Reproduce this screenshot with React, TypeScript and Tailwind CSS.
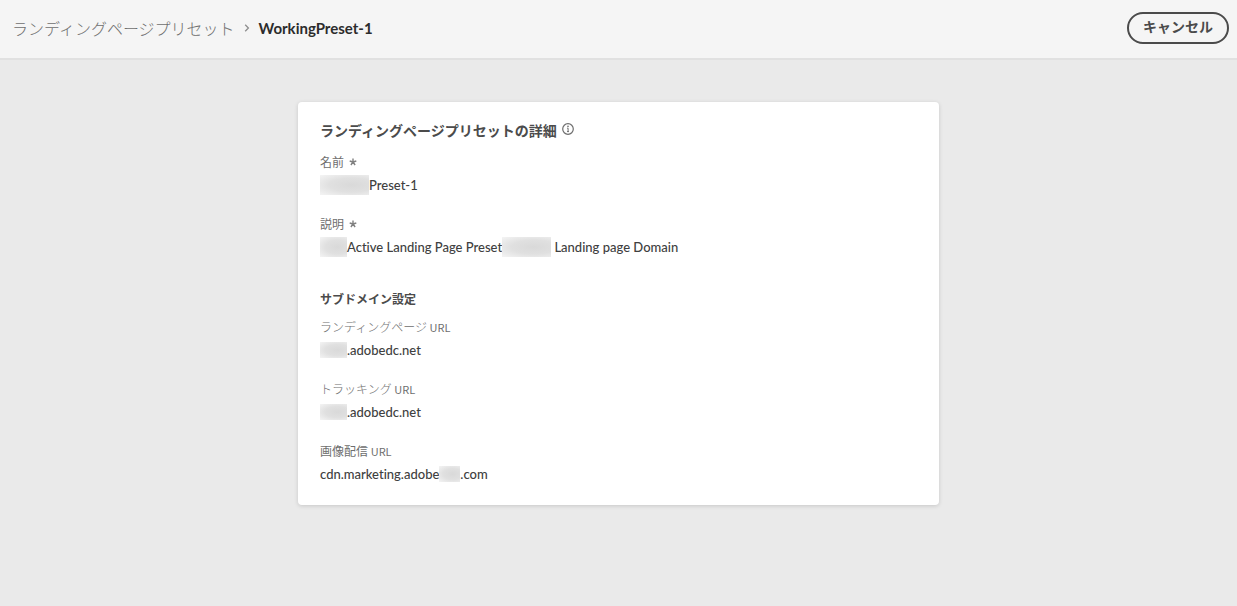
import type { ReactNode } from "react";

const REDACTION =
  "inline-block bg-[radial-gradient(ellipse_at_65%_50%,#d9d9d9_0%,#e0e0e0_50%,#f4f4f4_100%)] align-middle";

function Redacted({ size }: { size: string }) {
  return <span aria-hidden="true" className={`${REDACTION} ${size}`} />;
}

function InfoIcon() {
  return (
    <svg className="mb-0.5" width="12" height="12" viewBox="0 0 12 12" fill="none" aria-hidden="true">
      <circle cx="6" cy="6" r="5.3" stroke="#6e6e6e" strokeWidth="1.2" />
      <circle cx="6" cy="3.4" r="0.8" fill="#6e6e6e" />
      <path d="M5.1 5.2h1v3.3M5 8.6h2" stroke="#6e6e6e" strokeWidth="1" />
    </svg>
  );
}

function RequiredMark() {
  return (
    <svg width="8" height="8" viewBox="0 0 8 8" fill="none" aria-label="必須" role="img">
      <path
        d="M4 4V.6M4 4l3.3-1M4 4l2.1 3M4 4L1.9 7M4 4L.7 3"
        stroke="#808080"
        strokeWidth="1.4"
      />
    </svg>
  );
}

interface FieldProps {
  label: ReactNode;
  required?: boolean;
  light?: boolean;
  children: ReactNode;
}

function Field({ label, required = false, light = false, children }: FieldProps) {
  return (
    <div className="flex flex-col gap-0.5">
      <dt
        className={`flex h-5 items-center gap-[5px] text-[12px] leading-5 text-[#6e6e6e] ${
          light ? "font-light" : "font-normal"
        }`}
      >
        <span>{label}</span>
        {required && <RequiredMark />}
      </dt>
      <dd className="flex h-[22px] items-center whitespace-pre font-['Lato','Noto_Sans_CJK_JP',sans-serif] text-[13px] leading-[22px] font-medium text-[#404040] [font-variant-ligatures:none]">
        {children}
      </dd>
    </div>
  );
}

function Url() {
  return <span className="text-[11px] font-normal">URL</span>;
}

export default function App() {
  return (
    <div className="flex min-h-screen flex-col bg-[#eaeaea] font-['Noto_Sans_CJK_JP',sans-serif] text-[#4b4b4b]">
      <header className="flex items-center justify-between border-b-2 border-[#e1e1e1] bg-[#f5f5f5] pt-3 pr-2 pb-3.5 pl-3">
        <nav aria-label="パンくずリスト">
          <ol className="flex items-center gap-2">
            <li>
              <a href="#presets" className="block text-[16px] leading-8 font-light text-[#6e6e6e]">
                ランディングページプリセット
              </a>
            </li>
            <li aria-hidden="true">
              <svg width="8" height="10" viewBox="0 0 8 10" fill="none">
                <path d="M2.2 1.8L5.4 5 2.2 8.2" stroke="#8e8e8e" strokeWidth="1.3" />
              </svg>
            </li>
            <li
              aria-current="page"
              className="font-['Lato','Noto_Sans_CJK_JP',sans-serif] text-[15px] leading-8 font-bold text-[#2c2c2c]"
            >
              WorkingPreset-1
            </li>
          </ol>
        </nav>
        <button
          type="button"
          className="h-8 rounded-full border-2 border-[#4b4b4b] px-3.5 pb-1 text-[14px] leading-6 font-bold text-[#4b4b4b]"
        >
          キャンセル
        </button>
      </header>

      <main className="flex justify-center px-6 py-[42px]">
        <section className="w-full max-w-[641px] rounded bg-white px-[22px] pt-[18px] pb-5 shadow-[0_1px_4px_rgba(0,0,0,0.15)]">
          <h1 className="flex items-center gap-[5px] text-[14px] leading-5 font-bold">
            ランディングページプリセットの詳細
            <InfoIcon />
          </h1>
          <dl className="mt-3 flex flex-col gap-[18px]">
            <Field label="名前" required>
              <Redacted size="h-5 w-[49px]" />
              Preset-1
            </Field>
            <Field label="説明" required>
              <Redacted size="h-5 w-[27px]" />
              Active Landing Page Preset
              <Redacted size="h-5 w-[49px]" />
              {" Landing page Domain"}
            </Field>
          </dl>

          <h2 className="mt-[31px] text-[12px] leading-5 font-bold">サブドメイン設定</h2>
          <dl className="mt-2 flex flex-col gap-[18px]">
            <Field label={<>ランディングページ <Url /></>} light>
              <Redacted size="h-4 w-[27px]" />
              .adobedc.net
            </Field>
            <Field label={<>トラッキング <Url /></>} light>
              <Redacted size="h-4 w-[27px]" />
              .adobedc.net
            </Field>
            <Field label={<>画像配信 <Url /></>}>
              cdn.marketing.adobe
              <Redacted size="h-4 w-[21px]" />
              .com
            </Field>
          </dl>
        </section>
      </main>
    </div>
  );
}
